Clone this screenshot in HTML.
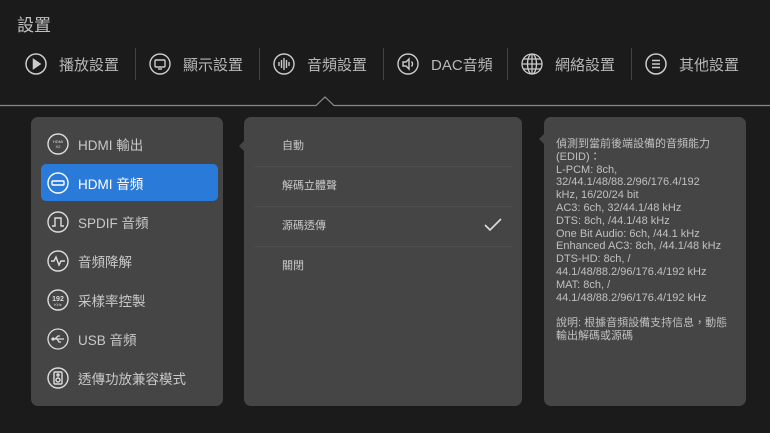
<!DOCTYPE html>
<html><head><meta charset="utf-8"><style>
*{margin:0;padding:0;box-sizing:border-box}
body{width:770px;height:433px;background:#1b1b1b;font-family:"Liberation Sans","Noto Sans CJK TC",sans-serif;color:#c8c8c8;position:relative;overflow:hidden}
.abs{position:absolute}
.title{left:17px;top:11px;font-size:17px;color:#c0c0c0}
.tab{position:absolute;top:52px;height:24px;display:flex;align-items:center;font-size:15px;color:#b8b8b8}
.tab svg{margin-right:12px}
.sep{position:absolute;top:48px;width:1px;height:32px;background:#444}
.panel{position:absolute;background:#454545;border-radius:7px}
.li{position:absolute;left:10px;width:177px;height:37px;display:flex;align-items:center;font-size:13.5px;color:#c8c8c8;border-radius:5px}
.li svg{margin-left:6px;margin-right:9px}
.mi{position:absolute;left:38px;font-size:11px;color:#c8c8c8}
.hl{position:absolute;left:10px;right:10px;height:1px;background:#4d4d4d}
.info{left:556px;top:138px;font-size:11px;line-height:12.8px;color:#c0c0c0;width:190px;white-space:nowrap}
</style></head><body>
<div class="abs title">設置</div>

<div class="tab" style="left:25px"><svg width="22" height="22" viewBox="0 0 22 22" fill="none" stroke="#ccc" stroke-width="1.5"><circle cx="11" cy="11" r="10"/><path d="M8.5 6.5L15 11L8.5 15.5Z" fill="#ccc"/></svg>播放設置</div>
<div class="sep" style="left:135px"></div>
<div class="tab" style="left:149px"><svg width="22" height="22" viewBox="0 0 22 22" fill="none" stroke="#ccc" stroke-width="1.4"><circle cx="11" cy="11" r="10"/><rect x="6" y="7" width="10" height="7" rx="1"/><path d="M9 16h4"/></svg>顯示設置</div>
<div class="sep" style="left:259px"></div>
<div class="tab" style="left:273px"><svg width="22" height="22" viewBox="0 0 22 22" fill="none" stroke="#ccc" stroke-width="1.4"><circle cx="11" cy="11" r="10"/><path d="M6 9v4M8.5 7v8M11 5v12M13.5 7v8M16 9v4"/></svg>音頻設置</div>
<div class="sep" style="left:383px"></div>
<div class="tab" style="left:397px"><svg width="22" height="22" viewBox="0 0 22 22" fill="none" stroke="#ccc" stroke-width="1.4"><circle cx="11" cy="11" r="10"/><path d="M6 9h3l3-3v10l-3-3H6Z"/><path d="M14.5 8.5a3.5 3.5 0 0 1 0 5"/></svg>DAC音頻</div>
<div class="sep" style="left:507px"></div>
<div class="tab" style="left:521px"><svg width="22" height="22" viewBox="0 0 22 22" fill="none" stroke="#ccc" stroke-width="1.3"><circle cx="11" cy="11" r="10"/><ellipse cx="11" cy="11" rx="4.5" ry="10"/><path d="M11 1v20M1 11h20M2.5 6h17M2.5 16h17"/></svg>網絡設置</div>
<div class="sep" style="left:631px"></div>
<div class="tab" style="left:645px"><svg width="22" height="22" viewBox="0 0 22 22" fill="none" stroke="#ccc" stroke-width="1.5"><circle cx="11" cy="11" r="10"/><path d="M7 7.5h8M7 11h8M7 14.5h8"/></svg>其他設置</div>

<svg class="abs" style="left:0;top:95px" width="770" height="12"><path d="M0 10.5H316L325 2L334 10.5H770" fill="none" stroke="#8a8a8a" stroke-width="1.2"/></svg>

<div class="panel" style="left:31px;top:117px;width:192px;height:289px">
 <div class="li" style="top:8px"><svg width="22" height="22" viewBox="0 0 22 22" fill="none" stroke="#ddd" stroke-width="1.4"><circle cx="11" cy="11" r="10"/><text x="11" y="10" font-size="4" fill="#ddd" stroke="none" text-anchor="middle" font-family="Liberation Sans">HDMI</text><text x="11" y="15" font-size="4" fill="#ddd" stroke="none" text-anchor="middle" font-family="Liberation Sans">X2</text></svg>HDMI 輸出</div>
 <div class="li" style="top:47px;background:#2a7bd9;color:#fff"><svg width="22" height="22" viewBox="0 0 22 22" fill="none" stroke="#fff" stroke-width="1.4"><circle cx="11" cy="11" r="10"/><rect x="5" y="9" width="12" height="4" rx="1"/></svg>HDMI 音頻</div>
 <div class="li" style="top:86px"><svg width="22" height="22" viewBox="0 0 22 22" fill="none" stroke="#ddd" stroke-width="1.4"><circle cx="11" cy="11" r="10"/><path d="M5 15h3V7h6v8h3"/></svg>SPDIF 音頻</div>
 <div class="li" style="top:125px"><svg width="22" height="22" viewBox="0 0 22 22" fill="none" stroke="#ddd" stroke-width="1.4"><circle cx="11" cy="11" r="10"/><path d="M4 11h3l2-4 3 8 2-4h4"/></svg>音頻降解</div>
 <div class="li" style="top:164px"><svg width="22" height="22" viewBox="0 0 22 22" fill="none" stroke="#ddd" stroke-width="1.4"><circle cx="11" cy="11" r="10"/><text x="11" y="12" font-size="7" font-weight="bold" fill="#ddd" stroke="none" text-anchor="middle" font-family="Liberation Sans">192</text><text x="11" y="17" font-size="4" fill="#ddd" stroke="none" text-anchor="middle" font-family="Liberation Sans">KHz</text></svg>采樣率控製</div>
 <div class="li" style="top:203px"><svg width="22" height="22" viewBox="0 0 22 22" fill="none" stroke="#ddd" stroke-width="1.3"><circle cx="11" cy="11" r="10"/><path d="M5 11h12M8 11l3-3h2M10 11l2 3h2"/><circle cx="6" cy="11" r="1" fill="#ddd"/></svg>USB 音頻</div>
 <div class="li" style="top:242px"><svg width="22" height="22" viewBox="0 0 22 22" fill="none" stroke="#ddd" stroke-width="1.4"><circle cx="11" cy="11" r="10"/><rect x="7" y="5" width="8" height="12" rx="1"/><circle cx="11" cy="13" r="2"/><circle cx="11" cy="8" r="1"/></svg>透傳功放兼容模式</div>
</div>

<div class="panel" style="left:244px;top:117px;width:278px;height:289px">
 <svg class="abs" style="left:-5px;top:23px" width="6" height="12"><path d="M6 0L0 6L6 12Z" fill="#454545"/></svg>
 <div class="mi" style="top:20px">自動</div>
 <div class="hl" style="top:49px"></div>
 <div class="mi" style="top:60px">解碼立體聲</div>
 <div class="hl" style="top:89px"></div>
 <div class="mi" style="top:100px">源碼透傳</div>
 <svg class="abs" style="left:240px;top:101px" width="18" height="14"><path d="M1 7l5 5L17 1" fill="none" stroke="#ddd" stroke-width="1.6"/></svg>
 <div class="hl" style="top:129px"></div>
 <div class="mi" style="top:140px">關閉</div>
</div>

<div class="panel" style="left:544px;top:117px;width:202px;height:289px">
 <svg class="abs" style="left:-5px;top:16px" width="6" height="12"><path d="M6 0L0 6L6 12Z" fill="#454545"/></svg>
</div>
<div class="abs info">偵測到當前後端設備的音頻能力<br>(EDID)：<br>L-PCM: 8ch,<br>32/44.1/48/88.2/96/176.4/192<br>kHz, 16/20/24 bit<br>AC3: 6ch, 32/44.1/48 kHz<br>DTS: 8ch, /44.1/48 kHz<br>One Bit Audio: 6ch, /44.1 kHz<br>Enhanced AC3: 8ch, /44.1/48 kHz<br>DTS-HD: 8ch, /<br>44.1/48/88.2/96/176.4/192 kHz<br>MAT: 8ch, /<br>44.1/48/88.2/96/176.4/192 kHz<br><br>說明: 根據音頻設備支持信息，動態<br>輸出解碼或源碼</div>
</body></html>
